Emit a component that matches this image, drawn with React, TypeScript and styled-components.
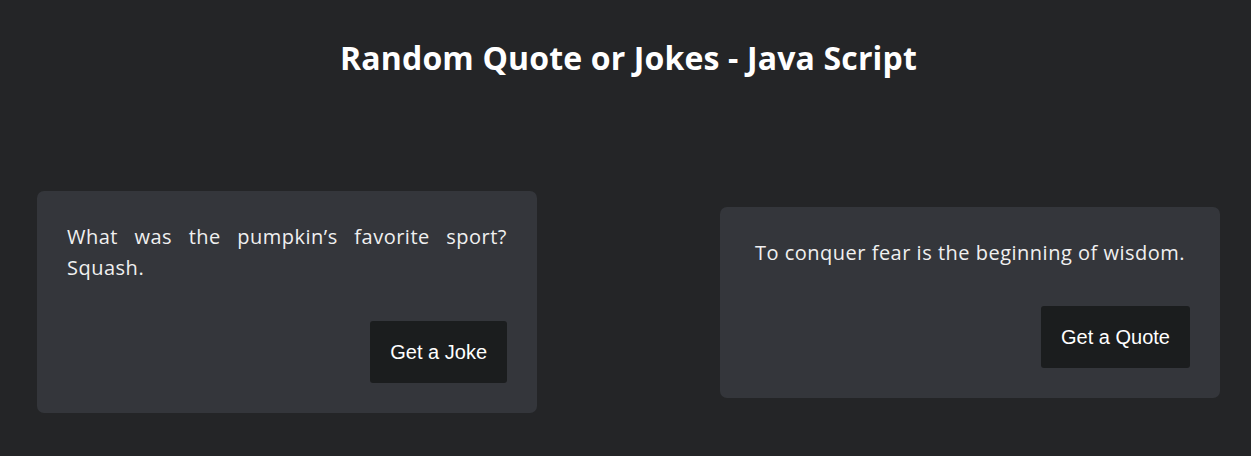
import React from "react";
import styled, { createGlobalStyle } from "styled-components";

const Global = createGlobalStyle`
  html, body { margin: 0; padding: 0; background: #242527; }
  body { font-family: "Open Sans", "Noto Sans", sans-serif; color: #ffffff; }
`;

const Page = styled.div`
  min-height: 456px;
  background: #242527;
  padding: 40px 31px 0 37px;
  box-sizing: border-box;
`;

const Title = styled.h1`
  margin: 0;
  text-align: center;
  font-family: "Open Sans", sans-serif;
  font-weight: 700;
  font-size: 32px;
  letter-spacing: 0.15px;
  line-height: 36px;
  color: #ffffff;
`;

const Row = styled.div`
  display: flex;
  align-items: center;
  justify-content: space-between;
  margin-top: 115px;
`;

const Card = styled.div<{ $align: "justify" | "center" }>`
  width: 500px;
  box-sizing: border-box;
  background: #34363b;
  border-radius: 7px;
  padding: 30px;
  display: flex;
  flex-direction: column;
  text-align: ${(p) => p.$align};
`;

const Text = styled.p`
  margin: 0 0 38px;
  font-family: "Open Sans", sans-serif;
  font-weight: 400;
  font-size: 20px;
  line-height: 31px;
  color: #f0f0f0;
  letter-spacing: 0.5px;
`;

const Button = styled.button`
  align-self: flex-end;
  background: #1b1d1e;
  color: #ffffff;
  border: none;
  border-radius: 3px;
  font-family: "Liberation Sans", Arial, sans-serif;
  font-size: 20px;
  line-height: 22px;
  padding: 20px 20px;
  cursor: pointer;
`;

export default function App() {
  return (
    <>
      <Global />
      <Page>
        <Title>Random Quote or Jokes - Java Script</Title>
        <Row>
          <Card $align="justify">
            <Text>What was the pumpkin’s favorite sport? Squash.</Text>
            <Button>Get a Joke</Button>
          </Card>
          <Card $align="center">
            <Text>To conquer fear is the beginning of wisdom.</Text>
            <Button>Get a Quote</Button>
          </Card>
        </Row>
      </Page>
    </>
  );
}
